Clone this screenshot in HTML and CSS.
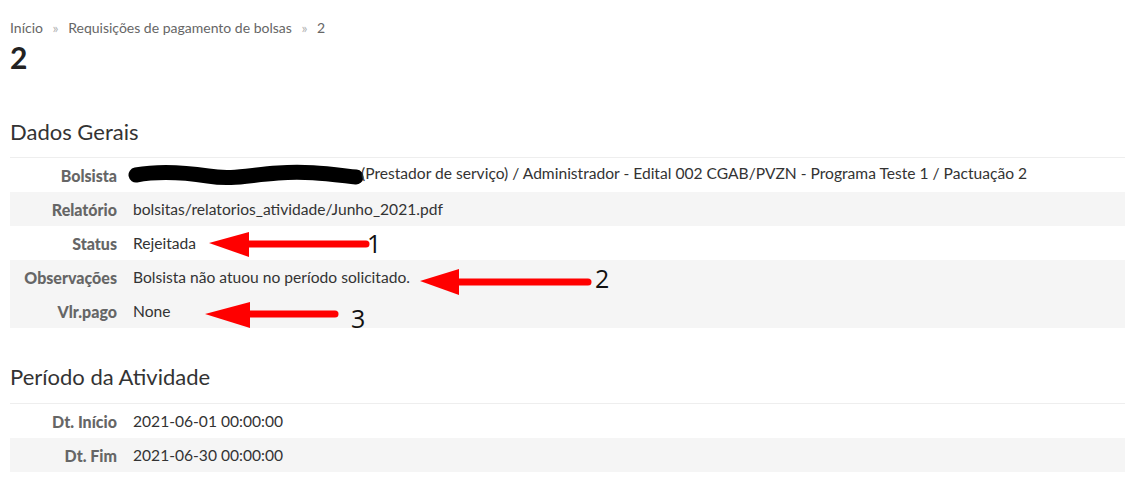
FILE: index.html
```html
<!DOCTYPE html>
<html lang="pt-BR">
<head>
    <meta charset="UTF-8">
    <title>2 | Requisições de pagamento de bolsas</title>
    <link rel="stylesheet" href="styles.css">
</head>
<body>
    <div class="content">
        <div class="breadcrumbs">
            <a href="#">Início</a>
            <span class="sep">&raquo;</span>
            <a href="#">Requisições de pagamento de bolsas</a>
            <span class="sep">&raquo;</span>
            <span>2</span>
        </div>
        <h1>2</h1>

        <div class="notes">
            <h2>Dados Gerais</h2>
            <table class="info">
                <tr>
                    <th>Bolsista</th>
                    <td><svg class="redacted" width="236" height="24" viewBox="0 0 236 24"><path d="M8 12 C 30 8, 60 10, 80 13 C 105 17, 120 12, 150 10 C 180 8, 200 11, 228 14" stroke="#000" stroke-width="15" stroke-linecap="round" fill="none"/></svg>(Prestador de serviço) / Administrador - Edital 002 CGAB/PVZN - Programa Teste 1 / Pactuação 2</td>
                </tr>
                <tr class="alt">
                    <th>Relatório</th>
                    <td>bolsitas/relatorios_atividade/Junho_2021.pdf</td>
                </tr>
                <tr>
                    <th>Status</th>
                    <td>Rejeitada</td>
                </tr>
                <tr class="alt">
                    <th>Observações</th>
                    <td>Bolsista não atuou no período solicitado.</td>
                </tr>
                <tr class="alt">
                    <th>Vlr.pago</th>
                    <td>None</td>
                </tr>
            </table>

            <h2>Período da Atividade</h2>
            <table class="info">
                <tr>
                    <th>Dt. Início</th>
                    <td>2021-06-01 00:00:00</td>
                </tr>
                <tr class="alt">
                    <th>Dt. Fim</th>
                    <td>2021-06-30 00:00:00</td>
                </tr>
            </table>
        </div>

        <!-- setas de anotação desenhadas por cima -->
        <svg class="marks" width="1137" height="480" viewBox="0 0 1137 480">
            <g fill="#ff0000" stroke="#ff0000" stroke-linecap="round">
                <line x1="245" y1="244" x2="366" y2="244" stroke-width="7"/>
                <polygon points="209,243 249,232 249,257" stroke="none"/>
                <line x1="455" y1="282" x2="588" y2="282" stroke-width="7"/>
                <polygon points="420,281 459,269 459,295" stroke="none"/>
                <line x1="245" y1="314" x2="335" y2="314" stroke-width="7"/>
                <polygon points="205,314 250,302 250,328" stroke="none"/>
            </g>
            <g class="marks-text">
                <text x="367" y="253">1</text>
                <text x="595" y="288">2</text>
                <text x="351" y="328">3</text>
            </g>
        </svg>
    </div>
</body>
</html>
```

FILE: styles.css
```css
body {
    margin: 0;
    padding: 0;
    background-color: #fff;
    color: #333;
    font-family: Lato, "Open Sans", sans-serif;
    font-size: 14px;
}

.content {
    position: relative;
    padding: 18px 12px 0 10px;
}

.breadcrumbs {
    color: #666;
    font-size: 14px;
    line-height: 20px;
}

.breadcrumbs a {
    color: #666;
    text-decoration: none;
}

.breadcrumbs .sep {
    color: #b3b3b3;
    margin: 0 6px;
}

h1 {
    margin: 2px 0 0;
    font-size: 30px;
    font-weight: bold;
    line-height: 34px;
    color: #222;
}

h2 {
    margin: 0;
    font-size: 22px;
    font-weight: normal;
    line-height: 28px;
    color: #333;
}

.notes h2:first-child {
    margin-top: 44px;
    margin-bottom: 11px;
}

.notes table + h2 {
    margin-top: 35px;
    margin-bottom: 12px;
}

.info {
    width: 100%;
    border-collapse: collapse;
    border-top: 1px solid #eee;
}

.info tr.alt {
    background-color: #f5f5f5;
}

.info th {
    width: 107px;
    padding: 0 8px 0 0;
    text-align: right;
    font-weight: 900;
    color: #666;
    font-size: 16px;
    height: 34px;
    white-space: nowrap;
}

.info td {
    padding: 0 0 0 8px;
    color: #333;
    font-size: 15.6px;
    height: 34px;
    white-space: nowrap;
}

.redacted {
    vertical-align: middle;
    margin-left: -5px;
    margin-right: -3px;
}

.marks {
    position: absolute;
    top: 0;
    left: 0;
    pointer-events: none;
}

.marks-text text {
    font-family: "Open Sans", "DejaVu Sans", sans-serif;
    font-size: 25px;
    fill: #111;
}
```
